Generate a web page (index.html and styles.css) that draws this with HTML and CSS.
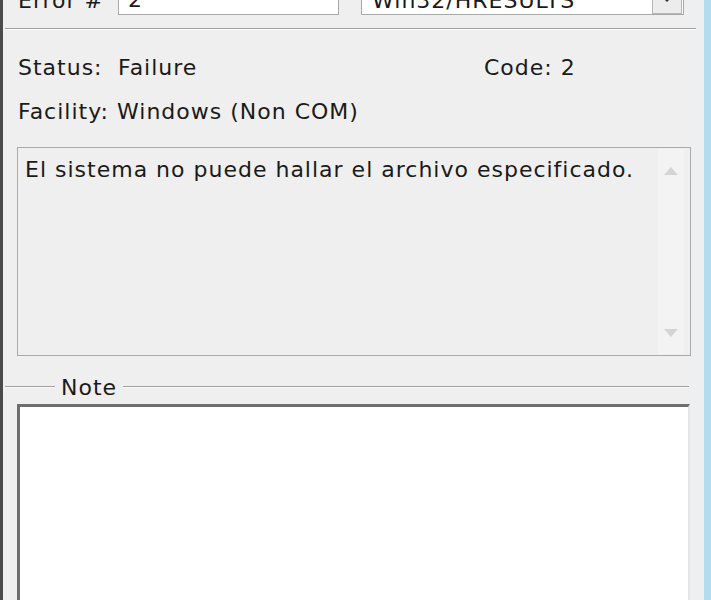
FILE: index.html
```html
<!DOCTYPE html>
<html>
<head>
<meta charset="utf-8">
<link rel="stylesheet" href="styles.css">
</head>
<body>
<div class="window">
  <div class="toprow">
    <span class="lbl err-lbl">Error #</span>
    <div class="field num">2</div>
    <div class="combo">
      <span class="combo-text">Win32/HRESULTS</span>
      <span class="combo-btn"><svg width="10" height="6" viewBox="0 0 10 6"><path d="M1 1 L5 5 L9 1 Z" fill="#333"/></svg></span>
    </div>
  </div>
  <div class="sep"></div>
  <div class="info">
    <div class="inforow"><span class="status-lbl">Status:</span><span class="status-val">Failure</span><span class="code">Code: 2</span></div>
    <div class="inforow">Facility: Windows (Non COM)</div>
  </div>
  <div class="msgbox">
    <div class="msgtext">El sistema no puede hallar el archivo especificado.</div>
    <div class="scroll">
      <svg width="16" height="10" viewBox="0 0 16 10"><path d="M8 1 L15 9 L1 9 Z" fill="#d4d4d4"/></svg>
      <svg width="16" height="10" viewBox="0 0 16 10"><path d="M1 1 L15 1 L8 9 Z" fill="#d4d4d4"/></svg>
    </div>
  </div>
  <div class="group">
    <div class="legend"><span class="gline short"></span><span class="gtitle">Note</span><span class="gline"></span></div>
    <div class="note"></div>
  </div>
</div>
</body>
</html>
```
FILE: styles.css
```css
html, body {
  margin: 0;
  padding: 0;
  background: #efefef;
  overflow: hidden;
}
.window {
  width: 711px;
  height: 600px;
  box-sizing: border-box;
  border-left: 3px solid #4a4a4a;
  border-right: 7px solid #b4dcef;
  background: #efefef;
  font-family: "DejaVu Sans", sans-serif;
  font-size: 22px;
  letter-spacing: 1px;
  color: #1a1a1a;
  overflow: hidden;
}
.toprow {
  display: flex;
  align-items: center;
  margin-top: -16px;
  height: 32px;
}
.err-lbl {
  width: 100px;
  padding-left: 15px;
}
.field {
  height: 28px;
  border: 1px solid #a8a8a8;
  background: #fff;
  padding-left: 9px;
  line-height: 28px;
  width: 210px;
}
.combo {
  margin-left: 22px;
  width: 321px;
  height: 28px;
  border: 1px solid #a8a8a8;
  background: #fff;
  display: flex;
  align-items: center;
  justify-content: space-between;
}
.combo-text {
  padding-left: 10px;
}
.combo-btn {
  width: 28px;
  height: 26px;
  margin-right: 1px;
  border: 1px solid #b5b5b5;
  background: #ececec;
  display: flex;
  align-items: center;
  justify-content: center;
}
.sep {
  margin: 12px 8px 0 2px;
  height: 1px;
  background: #a0a0a0;
  border-bottom: 1px solid #fbfbfb;
}
.info {
  padding: 23px 0 0 15px;
}
.inforow {
  height: 44px;
  line-height: 30px;
  display: flex;
}
.status-lbl {
  width: 100px;
}
.status-val {
  width: 366px;
}
.msgbox {
  margin: 6px 0 0 14px;
  width: 672px;
  height: 207px;
  border: 1px solid #a9a9a9;
  display: flex;
  justify-content: space-between;
}
.msgtext {
  padding: 7px 0 0 7px;
  line-height: 30px;
}
.scroll {
  width: 26px;
  margin: 1px 6px 1px 0;
  background: #f3f3f3;
  display: flex;
  flex-direction: column;
  justify-content: space-between;
  align-items: center;
  padding: 17px 0 16px;
}
.group {
  margin-top: 21px;
}
.legend {
  display: flex;
  align-items: center;
  margin-left: 2px;
  margin-right: 15px;
  height: 20px;
}
.gline {
  flex: 1;
  height: 1px;
  background: #a0a0a0;
  border-bottom: 1px solid #fafafa;
}
.gline.short {
  flex: none;
  width: 50px;
}
.gtitle {
  padding: 0 6px;
}
.note {
  margin: 7px 0 0 14px;
  width: 668px;
  height: 300px;
  background: #fff;
  border-top: 3px solid #6e6e6e;
  border-left: 3px solid #6e6e6e;
  border-right: 2px solid #e6e6e6;
}
```
